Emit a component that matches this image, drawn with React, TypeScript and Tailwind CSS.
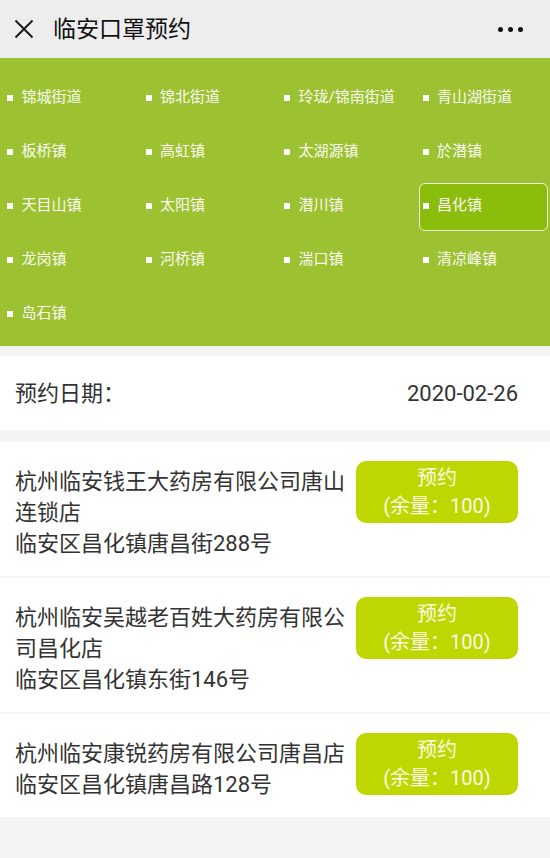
import React from "react";

const areas = [
  "锦城街道", "锦北街道", "玲珑/锦南街道", "青山湖街道",
  "板桥镇", "高虹镇", "太湖源镇", "於潜镇",
  "天目山镇", "太阳镇", "潜川镇", "昌化镇",
  "龙岗镇", "河桥镇", "湍口镇", "清凉峰镇",
  "岛石镇",
];

const stores = [
  { name: "杭州临安钱王大药房有限公司唐山连锁店", addr: "临安区昌化镇唐昌街288号" },
  { name: "杭州临安吴越老百姓大药房有限公司昌化店", addr: "临安区昌化镇东街146号" },
  { name: "杭州临安康锐药房有限公司唐昌店", addr: "临安区昌化镇唐昌路128号" },
];

const font = { fontFamily: 'Roboto, "Noto Sans CJK SC", "Noto Sans", sans-serif' };

export default function App() {
  return (
    <div className="w-full min-h-[858px] bg-[#f4f4f4]" style={font}>
      {/* Header */}
      <div className="h-[58px] bg-[#ededed] flex items-center relative">
        <svg className="ml-[14px]" width="20" height="20" viewBox="0 0 20 20">
          <path d="M1.5 1.5 L18.5 18.5 M18.5 1.5 L1.5 18.5" stroke="#1a1a1a" strokeWidth="2" fill="none" />
        </svg>
        <div className="ml-[19px] text-[23px] text-[#111] leading-none">临安口罩预约</div>
        <div className="ml-auto mr-[27px] flex gap-[5px] items-center">
          <span className="w-[5px] h-[5px] rounded-full bg-[#111]" />
          <span className="w-[5px] h-[5px] rounded-full bg-[#111]" />
          <span className="w-[5px] h-[5px] rounded-full bg-[#111]" />
        </div>
      </div>

      {/* Area grid */}
      <div className="bg-[#9cc231] pt-[17px] pb-[7px] pl-[3.5px] pr-[2px] grid grid-cols-4 gap-x-[9.5px] gap-y-[6px]">
        {areas.map((a) => {
          const sel = a === "昌化镇";
          return (
            <div
              key={a}
              className={
                sel
                  ? "h-[48px] flex items-center rounded-[6px] border border-[#eef4d4] bg-[#8abd0c] pl-[2.5px]"
                  : "h-[48px] flex items-center pl-[3.5px]"
              }
            >
              <span className="w-[6px] h-[6px] bg-white shrink-0 -mt-[3px]" />
              <span className="ml-[8.5px] text-[15px] text-[#fafaf0] whitespace-nowrap -mt-[3px]">{a}</span>
            </div>
          );
        })}
      </div>

      {/* Date row */}
      <div className="mt-[10px] bg-white h-[74px] flex items-center justify-between pl-[15px] pr-[32px] text-[22px] text-[#333]">
        <span>预约日期：</span>
        <span className="text-[22px]">2020-02-26</span>
      </div>

      {/* Store list */}
      <div className="mt-[12px] flex flex-col gap-[2px]">
        {stores.map((s) => (
          <div key={s.name} className="bg-white flex items-start pt-[19px] pb-[17px] pl-[15px] pr-[32px]">
            <div className="w-[333px] mt-[5px] text-[22px] leading-[31px] text-[#333]">
              <div>{s.name}</div>
              <div>{s.addr}</div>
            </div>
            <div className="ml-auto w-[162px] h-[62px] rounded-[10px] bg-[#bfd700] flex flex-col items-center justify-center text-[20px] leading-[28px] text-[#fbfbe6]">
              <span>预约</span>
              <span>(余量：100)</span>
            </div>
          </div>
        ))}
      </div>
    </div>
  );
}
